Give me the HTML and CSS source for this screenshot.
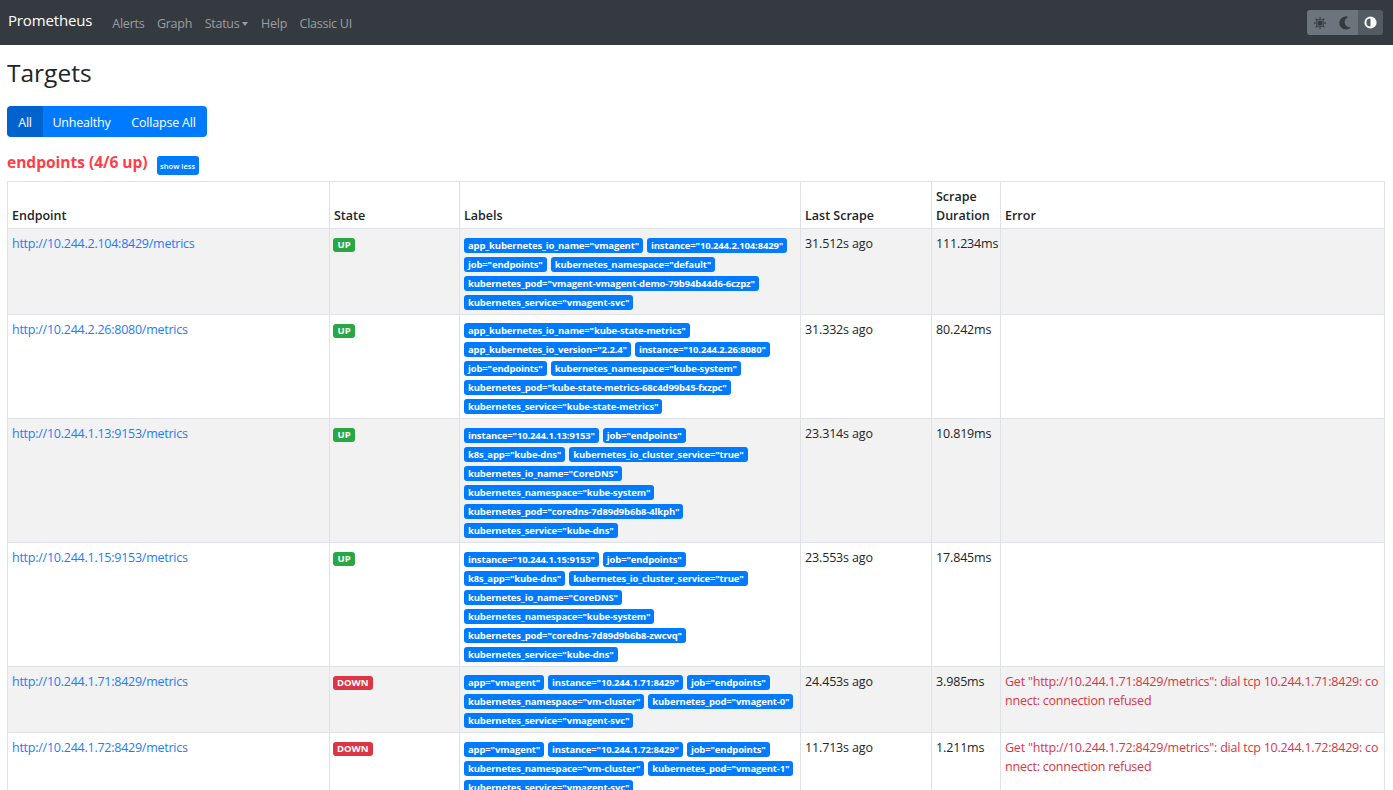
FILE: index.html
```html
<!DOCTYPE html>
<html lang="en">
<head>
<meta charset="utf-8">
<title>Targets</title>
<link rel="stylesheet" href="styles.css">
</head>
<body>
<nav class="navbar">
  <a class="brand">Prometheus</a>
  <ul class="nav">
    <li>Alerts</li><li>Graph</li><li class="caret">Status</li><li>Help</li><li>Classic UI</li>
  </ul>
  <div class="theme">
    <span class="tbtn"><svg viewBox="0 0 16 16" width="14" height="14"><g fill="#343a40"><path d="M8 .5l1.400 2.600-1.400-.4-1.400.4zM8 15.500l-1.400-2.600 1.400.4 1.400-.4zM.5 8l2.600-1.400-.4 1.400.4 1.400zM15.500 8l-2.600 1.400.4-1.400-.4-1.400zM2.700 2.700l2.800.9-1.300.7-.7 1.300zM13.300 13.300l-2.800-.9 1.300-.7.7-1.300zM13.300 2.700l-.9 2.800-.7-1.300-1.300-.7zM2.700 13.300l.9-2.800.7 1.300 1.300.7z"/><circle cx="8" cy="8" r="2.900"/></g><circle cx="8" cy="8" r="4.400" fill="none" stroke="#343a40" stroke-width="1"/></svg></span>
    <span class="tbtn"><svg viewBox="0 0 16 16" width="14" height="14"><path fill="#343a40" d="M9 .5a7.500 7.500 0 1 0 5.800 12.300c-.3.050-.7.100-1.100.100A5.900 5.900 0 0 1 10.600 1.900 .7.7 0 0 0 9 .5z"/></svg></span>
    <span class="tbtn active"><svg viewBox="0 0 16 16" width="13" height="13"><path fill="#fff" fill-rule="evenodd" d="M8 .5a7.500 7.500 0 1 1 0 15 7.500 7.500 0 0 1 0-15zM8 3a5 5 0 0 0 0 10z"/></svg></span>
  </div>
</nav>
<main class="container">
  <h1 class="title">Targets</h1>
  <div class="btn-group">
    <button class="btn active">All</button><button class="btn">Unhealthy</button><button class="btn">Collapse All</button>
  </div>
  <div class="pool-head">
    <a class="pool-name">endpoints (4/6 up)</a>
    <button class="btn-xs">show less</button>
  </div>
  <table class="targets">
    <colgroup><col class="c1"><col class="c2"><col class="c3"><col class="c4"><col class="c5"><col class="c6"></colgroup>
    <thead>
      <tr><th>Endpoint</th><th>State</th><th>Labels</th><th>Last Scrape</th><th>Scrape Duration</th><th>Error</th></tr>
    </thead>
    <tbody>
      <tr>
        <td><a class="link">http://10.244.2.104:8429/metrics</a></td>
        <td><span class="state up">UP</span></td>
        <td class="labels"><span class="lb">app_kubernetes_io_name="vmagent"</span><span class="lb">instance="10.244.2.104:8429"</span><br><span class="lb">job="endpoints"</span><span class="lb">kubernetes_namespace="default"</span><br><span class="lb">kubernetes_pod="vmagent-vmagent-demo-79b94b44d6-6czpz"</span><br><span class="lb">kubernetes_service="vmagent-svc"</span></td>
        <td>31.512s ago</td><td>111.234ms</td><td></td>
      </tr>
      <tr>
        <td><a class="link">http://10.244.2.26:8080/metrics</a></td>
        <td><span class="state up">UP</span></td>
        <td class="labels"><span class="lb">app_kubernetes_io_name="kube-state-metrics"</span><br><span class="lb">app_kubernetes_io_version="2.2.4"</span><span class="lb">instance="10.244.2.26:8080"</span><br><span class="lb">job="endpoints"</span><span class="lb">kubernetes_namespace="kube-system"</span><br><span class="lb">kubernetes_pod="kube-state-metrics-68c4d99b45-fxzpc"</span><br><span class="lb">kubernetes_service="kube-state-metrics"</span></td>
        <td>31.332s ago</td><td>80.242ms</td><td></td>
      </tr>
      <tr>
        <td><a class="link">http://10.244.1.13:9153/metrics</a></td>
        <td><span class="state up">UP</span></td>
        <td class="labels"><span class="lb">instance="10.244.1.13:9153"</span><span class="lb">job="endpoints"</span><br><span class="lb">k8s_app="kube-dns"</span><span class="lb">kubernetes_io_cluster_service="true"</span><br><span class="lb">kubernetes_io_name="CoreDNS"</span><br><span class="lb">kubernetes_namespace="kube-system"</span><br><span class="lb">kubernetes_pod="coredns-7d89d9b6b8-4lkph"</span><br><span class="lb">kubernetes_service="kube-dns"</span></td>
        <td>23.314s ago</td><td>10.819ms</td><td></td>
      </tr>
      <tr>
        <td><a class="link">http://10.244.1.15:9153/metrics</a></td>
        <td><span class="state up">UP</span></td>
        <td class="labels"><span class="lb">instance="10.244.1.15:9153"</span><span class="lb">job="endpoints"</span><br><span class="lb">k8s_app="kube-dns"</span><span class="lb">kubernetes_io_cluster_service="true"</span><br><span class="lb">kubernetes_io_name="CoreDNS"</span><br><span class="lb">kubernetes_namespace="kube-system"</span><br><span class="lb">kubernetes_pod="coredns-7d89d9b6b8-zwcvq"</span><br><span class="lb">kubernetes_service="kube-dns"</span></td>
        <td>23.553s ago</td><td>17.845ms</td><td></td>
      </tr>
      <tr>
        <td><a class="link">http://10.244.1.71:8429/metrics</a></td>
        <td><span class="state down">DOWN</span></td>
        <td class="labels"><span class="lb">app="vmagent"</span><span class="lb">instance="10.244.1.71:8429"</span><span class="lb">job="endpoints"</span><br><span class="lb">kubernetes_namespace="vm-cluster"</span><span class="lb">kubernetes_pod="vmagent-0"</span><br><span class="lb">kubernetes_service="vmagent-svc"</span></td>
        <td>24.453s ago</td><td>3.985ms</td><td class="err">Get "http://10.244.1.71:8429/metrics": dial tcp 10.244.1.71:8429: connect: connection refused</td>
      </tr>
      <tr>
        <td><a class="link">http://10.244.1.72:8429/metrics</a></td>
        <td><span class="state down">DOWN</span></td>
        <td class="labels"><span class="lb">app="vmagent"</span><span class="lb">instance="10.244.1.72:8429"</span><span class="lb">job="endpoints"</span><br><span class="lb">kubernetes_namespace="vm-cluster"</span><span class="lb">kubernetes_pod="vmagent-1"</span><br><span class="lb">kubernetes_service="vmagent-svc"</span></td>
        <td>11.713s ago</td><td>1.211ms</td><td class="err">Get "http://10.244.1.72:8429/metrics": dial tcp 10.244.1.72:8429: connect: connection refused</td>
      </tr>
    </tbody>
  </table>
</main>
</body>
</html>
```
FILE: styles.css
```css
* { box-sizing: border-box; }
html, body { margin: 0; padding: 0; }
body {
  font-family: "Open Sans", "Noto Sans", sans-serif;
  font-size: 12.500px;
  letter-spacing: -.15px;
  line-height: 19px;
  color: #212529;
  background: #fff;
  overflow: hidden;
  height: 790px;
}
.navbar {
  height: 45px;
  background: #343a40;
  display: flex;
  align-items: center;
  padding: 0 10px 0 8px;
}
.brand { color: #fff; font-size: 15px; margin-right: 20px; margin-bottom: 5px; }
.nav { list-style: none; display: flex; gap: 12.500px; margin: 2px 0 0; padding: 0; color: rgba(255,255,255,.5); font-size: 12.500px; letter-spacing: -.25px; }
.caret::after {
  content: "";
  display: inline-block;
  margin-left: 3px;
  vertical-align: 2px;
  border-top: 4px solid;
  border-left: 3.500px solid transparent;
  border-right: 3.500px solid transparent;
}
.theme { margin-left: auto; display: flex; height: 25px; border-radius: 3px; overflow: hidden; }
.tbtn { width: 25.300px; background: #6c757d; display: flex; align-items: center; justify-content: center; }
.tbtn.active { background: #545b62; }
.container { padding: 0 9px 0 7px; }
.title { font-size: 24.500px; font-weight: 500; line-height: 30px; margin: 0; padding-top: 13px; height: 61px; letter-spacing: 0; }
.btn-group { display: flex; width: 200px; height: 31px; border-radius: 4px; overflow: hidden; }
.btn {
  border: 0;
  margin: 0;
  padding: 2px 0 0;
  background: #007bff;
  color: #fff;
  font: inherit;
  letter-spacing: -.2px;
  flex: none;
}
.btn.active { background: #0062cc; width: 36px; }
.btn:nth-child(2) { width: 77px; }
.btn:nth-child(3) { width: 87px; }
.pool-head { display: flex; align-items: flex-start; margin-top: 15px; height: 20px; margin-bottom: 9px; }
.pool-name { color: #ff3d46; font-weight: 700; font-size: 15.500px; line-height: 20px; letter-spacing: 0; }
.btn-xs {
  margin: 4px 0 0 9px;
  border: 0;
  width: 42px;
  height: 19px;
  padding: 0;
  border-radius: 3px;
  background: #007bff;
  color: #fff;
  font-family: inherit;
  font-size: 7.600px;
  font-weight: 600;
  letter-spacing: 0;
}
.targets {
  table-layout: fixed;
  border-collapse: collapse;
  width: 1377px;
  border: 1px solid #dee2e6;
}
.c1 { width: 322px; }
.c2 { width: 130px; }
.c3 { width: 341px; }
.c4 { width: 131px; }
.c5 { width: 69px; }
.c6 { width: 384px; }
.targets th, .targets td {
  border: 1px solid #dee2e6;
  padding: 5px 4px 0;
  vertical-align: top;
  text-align: left;
}
.targets th { vertical-align: bottom; font-weight: 600; font-size: 12.500px; padding-bottom: 3px; height: 47px; letter-spacing: 0; }
.targets tbody tr:nth-child(odd) { background: #f2f2f2; }
.link { color: #1f7bfb; letter-spacing: -.25px; }
.state {
  display: inline-block;
  margin-left: -1px;
  font-size: 9.500px;
  line-height: 14px;
  font-weight: 700;
  letter-spacing: 0;
  color: #fff;
  padding: 0 4px;
  border-radius: 3px;
  vertical-align: 0;
}
.up { background: #28a745; padding: 0 4.500px; }
.down { background: #dc3545; }
.targets td.labels { font-size: 0; line-height: 0; padding-top: 8.650px; white-space: nowrap; }
.lb {
  display: inline-block;
  background: #007bff;
  color: #fff;
  font-size: 9.500px;
  font-weight: 700;
  letter-spacing: -.15px;
  line-height: 15px;
  height: 15px;
  padding: 0 4px;
  border-radius: 3px;
  margin: 0 4px 4px 0;
  white-space: nowrap;
}
.err { color: #dc3545; word-break: break-all; letter-spacing: -.22px; }
```
